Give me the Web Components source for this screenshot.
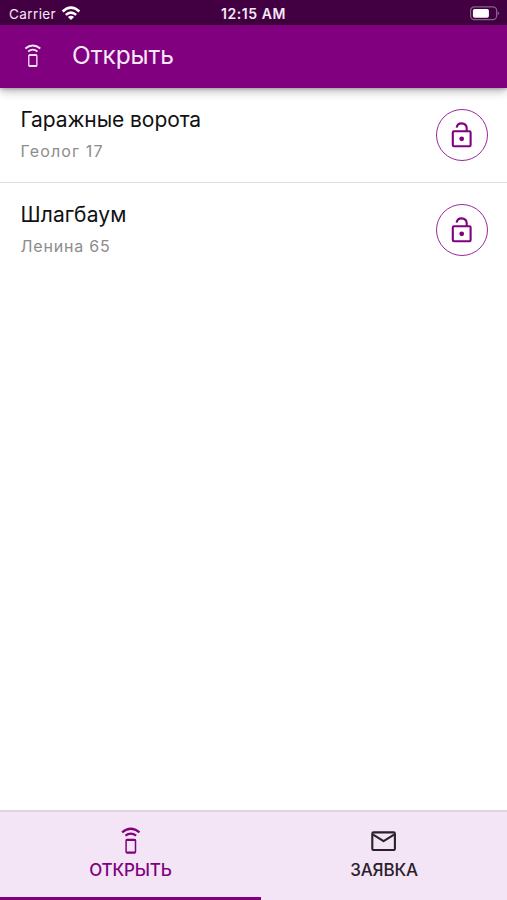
<!DOCTYPE html>
<html lang="ru">
<head>
<meta charset="utf-8">
<title>Открыть</title>
<style>
html, body { margin: 0; height: 100%; background: #fff; }
body { font-family: Inter, "Liberation Sans", sans-serif; overflow: hidden; }
</style>
</head>
<body>
<gate-app></gate-app>
<script>
const define = (name, html) => {
  const t = document.createElement('template');
  t.innerHTML = html;
  customElements.define(name, class extends HTMLElement {
    constructor() {
      super();
      this.attachShadow({ mode: 'open' }).appendChild(t.content.cloneNode(true));
    }
  });
};

define('remote-icon', `
<style>:host{display:block;width:20px;height:28px}svg{display:block}</style>
<svg width="20" height="28" viewBox="0 0 20 28" fill="none" stroke="currentColor" stroke-width="2">
  <path d="M1.1 5.3Q9.8-1.8 18.5 5.3" stroke-width="2.2"/>
  <path d="M4.4 8.7Q9.8 4.6 15.2 8.7" stroke-width="2.1"/>
  <rect x="5.1" y="12.6" width="9.4" height="13.2" rx="1" stroke-width="1.5"/>
  <path d="M5.3 13H14.3M5.3 25.5H14.3" stroke-width="2"/>
</svg>`);

define('mail-icon', `
<style>:host{display:block;width:26px;height:20px}svg{display:block}</style>
<svg width="26" height="20" viewBox="0 0 26 20" fill="none" stroke="currentColor" stroke-width="2.1" stroke-linejoin="round">
  <rect x="1.3" y="1.4" width="22.6" height="17.6" rx="1.3"/>
  <path d="M2.1 3.7L12.6 10.2L23.1 3.7"/>
</svg>`);

define('status-bar', `
<style>
:host{display:grid;grid-template-columns:1fr auto 1fr;align-items:center;height:25px;padding:2px 7px 0 9px;box-sizing:border-box;background:#420042;color:#f6e8f6;font-size:13.5px}
.left{display:flex;align-items:center;gap:5px}
.carrier{letter-spacing:.4px}
.time{font-weight:600;font-size:14px;letter-spacing:.55px;margin-right:2px}
.battery{justify-self:end}
svg{display:block}
</style>
<div class="left"><span class="carrier">Carrier</span>
<svg width="20" height="15" viewBox="0 0 20 15" fill="none" stroke="#fff" stroke-width="2.5">
  <path d="M1.6 5.5Q10-2.2 18.4 5.5"/><path d="M4.8 8.9Q10 4.3 15.2 8.9"/>
  <path d="M6.9 11Q10 8.6 13.1 11L10 14Z" fill="#fff" stroke="none"/>
</svg></div>
<span class="time">12:15 AM</span>
<svg class="battery" width="31" height="15" viewBox="0 0 31 15">
  <rect x="1.6" y=".9" width="26" height="12.8" rx="3.6" fill="none" stroke="#8a618a" stroke-width="1.2"/>
  <rect x="3.9" y="3" width="16" height="8.8" rx="1.8" fill="#fff"/>
  <path d="M28.6 5.2Q31.6 7.3 28.6 9.4Z" fill="#8a618a"/>
</svg>`);

define('app-bar', `
<style>
:host{display:flex;align-items:center;height:62.5px;padding:0 23px;box-sizing:border-box;background:#800080;color:#f9e8f9;box-shadow:0 3px 9px rgba(0,0,0,.3),0 1px 3px rgba(0,0,0,.2);position:relative;z-index:1}
.icon{width:20px;height:28px;margin-right:29px;transform:scale(.86)}
.title{font-size:24.5px;line-height:30px;white-space:nowrap;letter-spacing:-.05px;padding-bottom:3px}
</style>
<div class="icon"><remote-icon></remote-icon></div>
<span class="title"><slot></slot></span>`);

define('unlock-button', `
<style>
:host{display:flex;align-items:center;justify-content:center;width:52px;height:52px;box-sizing:border-box;border:1.5px solid #9a2a9a;border-radius:50%;color:#800080}
svg{display:block}
</style>
<svg width="22" height="28" viewBox="0 0 22 28" fill="none" stroke="currentColor" stroke-width="2.1">
  <rect x="1.8" y="10.2" width="17.8" height="15" rx="1.2"/>
  <path d="M5.6 6.7A5.1 5.1 0 0 1 15.7 6.9V10.2"/>
  <circle cx="10.7" cy="17.8" r="2.4" fill="currentColor" stroke="none"/>
</svg>`);

define('gate-item', `
<style>
:host{display:flex;align-items:center;justify-content:space-between;height:95px;padding:0 19px 0 20.5px;box-sizing:border-box}
:host([divided]){border-bottom:1px solid #dedede}
:host(:not([divided])){height:94px}
.text{display:flex;flex-direction:column;gap:8px;padding-bottom:2.4px}
.name{font-size:21px;line-height:26px;color:#111;letter-spacing:var(--name-spacing,-.06px);white-space:nowrap}
.place{font-size:16px;line-height:20px;color:#8c8c8c;letter-spacing:var(--place-spacing,.8px);white-space:nowrap}
</style>
<div class="text"><span class="name"><slot name="name"></slot></span><span class="place"><slot name="place"></slot></span></div>
<unlock-button></unlock-button>`);

define('nav-tab', `
<style>
:host{display:flex;flex-direction:column;align-items:center;justify-content:flex-start;box-sizing:border-box;padding-top:15px;color:#29202b;border-bottom:3px solid transparent}
:host([active]){color:#800080;border-bottom-color:#800080}
.icon{height:28px;display:flex;align-items:center}
.label{font-size:17px;line-height:22px;margin-top:4px;font-weight:450;letter-spacing:-.15px;white-space:nowrap}
</style>
<div class="icon"><slot name="icon"></slot></div><span class="label"><slot></slot></span>`);

define('tab-bar', `
<style>:host{display:grid;grid-template-columns:261px 1fr;height:90px;box-sizing:border-box;border-top:2px solid #ddd5df;background:#f3e5f5}</style>
<slot></slot>`);

define('gate-app', `
<style>
:host{display:flex;flex-direction:column;height:900px}
main{flex:1;padding-top:.5px}
.first{--place-spacing:1.15px;--name-spacing:-.08px}
.second{--name-spacing:.12px}
</style>
<status-bar></status-bar>
<app-bar>Открыть</app-bar>
<main>
  <gate-item divided class="first"><span slot="name">Гаражные ворота</span><span slot="place">Геолог 17</span></gate-item>
  <gate-item class="second"><span slot="name">Шлагбаум</span><span slot="place">Ленина 65</span></gate-item>
</main>
<tab-bar>
  <nav-tab active><remote-icon slot="icon"></remote-icon>ОТКРЫТЬ</nav-tab>
  <nav-tab><mail-icon slot="icon"></mail-icon>ЗАЯВКА</nav-tab>
</tab-bar>`);
</script>
</body>
</html>
